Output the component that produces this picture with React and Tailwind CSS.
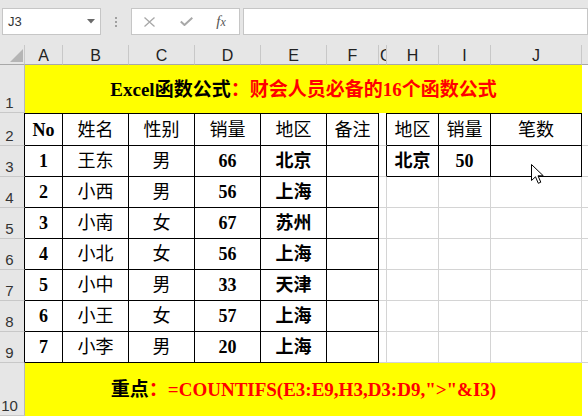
import React from "react";

const FONT = { fontFamily: '"Liberation Serif", "Noto Sans CJK SC", serif' };

const data = [
  ["1", "王东", "男", "66", "北京"],
  ["2", "小西", "男", "56", "上海"],
  ["3", "小南", "女", "67", "苏州"],
  ["4", "小北", "女", "56", "上海"],
  ["5", "小中", "男", "33", "天津"],
  ["6", "小王", "女", "57", "上海"],
  ["7", "小李", "男", "20", "上海"],
];

function RowHead({ n, dark }) {
  return (
    <div
      className={`bg-[#e6e6e6] border-b border-b-[#c8c8c8] border-r flex items-end justify-center pr-[5px] pb-[2px] text-[15px] leading-none text-[#333] ${
        dark ? "border-r-black" : "border-r-[#b8b8b8]"
      }`}
      style={{ fontFamily: '"Liberation Sans", Arial, sans-serif' }}
    >
      {n}
    </div>
  );
}

function Cell({ children, bold, top, kind = "black" }) {
  let b = "";
  if (kind === "black") b = "border-r border-b border-black";
  else if (kind === "gray") b = "border-r border-b border-[#d4d4d4]";
  else if (kind === "gsep") b = "border-r border-r-black border-b border-b-[#d4d4d4]";
  else if (kind === "bonly") b = "border-b border-[#d4d4d4]";
  return (
    <div
      className={`${b} ${top ? "border-t border-t-black" : ""} bg-white flex items-center justify-center text-[18px] leading-none text-black whitespace-nowrap ${
        bold ? "font-bold" : "font-normal"
      }`}
      style={FONT}
    >
      {children}
    </div>
  );
}

function ColHead({ children, left }) {
  return (
    <div
      className={`bg-[#e6e6e6] border-r border-r-[#c8c8c8] border-b border-b-[#a8a8a8] flex items-center overflow-hidden text-[16px] leading-none text-[#222] pt-[2px] ${
        left ? "justify-start pl-[1px]" : "justify-center"
      }`}
      style={{ fontFamily: '"Liberation Sans", Arial, sans-serif' }}
    >
      {children}
    </div>
  );
}

export default function App() {
  const letters = ["A", "B", "C", "D", "E", "F", "G", "H", "I", "J"];
  return (
    <div className="relative w-[588px] h-[416px] overflow-hidden bg-white">
      {/* toolbar */}
      <div className="h-[45px] bg-[#e6e6e6] flex items-start pt-[8px]">
        <div className="ml-[2px] w-[100px] h-[27px] bg-white border border-[#c6c6c6] flex items-center justify-between pl-[5px] pr-[5px]">
          <span
            className="text-[13px] leading-none text-[#333]"
            style={{ fontFamily: '"Liberation Sans", Arial, sans-serif' }}
          >
            J3
          </span>
          <svg width="8" height="5" viewBox="0 0 8 5">
            <path d="M0 0 L8 0 L4 4.5 Z" fill="#6a6a6a" />
          </svg>
        </div>
        <div className="w-[31px] h-[27px] flex flex-col items-center justify-center gap-[2px]">
          <div className="w-[2px] h-[2px] bg-[#a0a0a0]" />
          <div className="w-[2px] h-[2px] bg-[#a0a0a0]" />
          <div className="w-[2px] h-[2px] bg-[#a0a0a0]" />
        </div>
        <div className="w-[110px] h-[27px] bg-white border border-[#c6c6c6] flex items-center">
          <svg className="ml-[12px]" width="11" height="10" viewBox="0 0 11 10">
            <path d="M0.5 0.5 L10.5 9.5 M10.5 0.5 L0.5 9.5" stroke="#a8a8a8" strokeWidth="1.3" fill="none" />
          </svg>
          <svg className="ml-[25px]" width="13" height="9" viewBox="0 0 13 9">
            <path d="M0.8 4.5 L4.5 8 L12.3 0.8" stroke="#a8a8a8" strokeWidth="2" fill="none" />
          </svg>
          <span
            className="ml-[23px] text-[15px] italic leading-none text-[#555]"
            style={{ fontFamily: '"Liberation Serif", serif' }}
          >
            f<span className="text-[12px]">x</span>
          </span>
        </div>
        <div className="ml-[3px] w-[350px] h-[27px] bg-white border border-[#c6c6c6]" />
      </div>

      {/* sheet */}
      <div className="grid grid-cols-[25px_38px_66px_66px_66px_66px_52px_8px_52px_52px_91px_6px] grid-rows-[20px_48px_33px_31px_31px_31px_31px_31px_31px_31px_53px]">
        {/* header row */}
        <div className="bg-[#e6e6e6] border-r border-r-[#c8c8c8] border-b border-b-[#a8a8a8] relative">
          <svg className="absolute left-[10px] top-[4px]" width="13" height="13" viewBox="0 0 13 13">
            <path d="M13 0 L13 13 L0 13 Z" fill="#b5b5b5" />
          </svg>
        </div>
        {letters.map((l) => (
          <ColHead key={l} left={l === "G"}>
            {l}
          </ColHead>
        ))}
        <div className="bg-[#e6e6e6] border-b border-b-[#a8a8a8]" />

        {/* row 1 */}
        <RowHead n="1" />
        <div
          className="col-span-10 bg-[#ffff00] flex items-center justify-center text-[19px] font-bold leading-none whitespace-nowrap"
          style={FONT}
        >
          <span className="text-black">Excel函数公式</span>
          <span className="text-[#ff0000]">：财会人员必备的16个函数公式</span>
        </div>
        <div className="bg-white" />

        {/* row 2 */}
        <RowHead n="2" dark />
        <Cell top bold>No</Cell>
        <Cell top>姓名</Cell>
        <Cell top>性别</Cell>
        <Cell top>销量</Cell>
        <Cell top>地区</Cell>
        <Cell top>备注</Cell>
        <Cell kind="gsep" />
        <Cell top>地区</Cell>
        <Cell top>销量</Cell>
        <Cell top>笔数</Cell>
        <Cell kind="bonly" />

        {/* rows 3-9 */}
        {data.map((r, i) => (
          <React.Fragment key={r[0]}>
            <RowHead n={String(i + 3)} dark />
            <Cell bold>{r[0]}</Cell>
            <Cell>{r[1]}</Cell>
            <Cell>{r[2]}</Cell>
            <Cell bold>{r[3]}</Cell>
            <Cell bold>{r[4]}</Cell>
            <Cell />
            {i === 0 ? (
              <>
                <Cell kind="gsep" />
                <Cell bold>北京</Cell>
                <Cell bold>50</Cell>
                <Cell />
              </>
            ) : (
              <>
                <Cell kind="gray" />
                <Cell kind="gray" />
                <Cell kind="gray" />
                <Cell kind="gray" />
              </>
            )}
            <Cell kind="bonly" />
          </React.Fragment>
        ))}

        {/* row 10 */}
        <RowHead n="10" />
        <div
          className="col-span-10 bg-[#ffff00] flex items-center justify-center text-[19px] font-bold leading-none whitespace-nowrap"
          style={FONT}
        >
          <span className="text-black">重点</span>
          <span className="text-[#ff0000]">：=COUNTIFS(E3:E9,H3,D3:D9,"&gt;"&amp;I3)</span>
        </div>
        <div className="bg-white" />
      </div>

      {/* mouse cursor */}
      <svg className="absolute left-[531px] top-[164px]" width="14" height="21" viewBox="0 0 14 21">
        <path
          d="M0.5 0.5 L0.5 16.5 L4.5 12.8 L7.3 19.3 L9.8 18.2 L7 11.8 L12.3 11.8 Z"
          fill="#ffffff"
          stroke="#000000"
          strokeWidth="1"
          strokeLinejoin="miter"
        />
      </svg>
    </div>
  );
}
